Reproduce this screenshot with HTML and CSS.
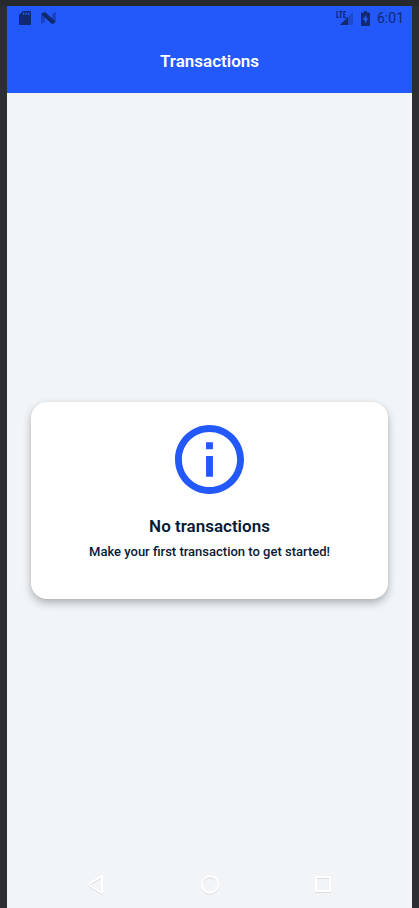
FILE: index.html
```html
<!DOCTYPE html>
<html lang="en">
<head>
<meta charset="utf-8">
<meta name="viewport" content="width=device-width, initial-scale=1">
<title>Transactions</title>
<link rel="stylesheet" href="styles.css">
</head>
<body>
<div class="screen">
  <header class="header">
    <div class="status">
      <div class="status-group status-left">
        <svg width="12" height="14" viewBox="0 0 12 14" aria-hidden="true"><path fill="#11296f" fill-rule="evenodd" d="M4 0H11Q12 0 12 1V13Q12 14 11 14H1Q0 14 0 13V4ZM4 1.500V4H5.300V1.500ZM6.500 1.500V4H7.800V1.500ZM9 1.500V4H10.300V1.500Z"/></svg>
        <svg width="15" height="12" viewBox="0 0 15 12" aria-hidden="true"><path fill="#1b43bb" d="M0 1L4 3V10L0 12ZM11 2L15 0V10L11 9Z"/><path fill="#11296f" d="M1 1L4 0L14 9V11L11 12L1 3Z"/></svg>
      </div>
      <div class="status-group status-right">
        <svg width="18" height="15" viewBox="0 0 18 15" aria-hidden="true"><path fill="#1d49ca" d="M17 1V14H4Z"/><path fill="#11296f" d="M12 6V14H4Z"/><path fill="none" stroke="#11296f" stroke-width="1.200" d="M1 0V6.400H3M3 .6H6.400M4.700 .6V7M10 .6H7.800V6.400H10M7.800 3.500H9.700"/></svg>
        <svg width="9" height="15" viewBox="0 0 9 15" aria-hidden="true"><path fill="#11296f" d="M3 0H6V1.500H8Q9 1.500 9 2.500V14Q9 15 8 15H1Q0 15 0 14V2.500Q0 1.500 1 1.500H3Z"/><path fill="#2359fb" d="M5.200 3.500L1.700 9H4V12.800L7.300 7.300H5.200Z"/></svg>
        <time class="clock">6:01</time>
      </div>
    </div>
    <h1 class="title">Transactions</h1>
  </header>
  <main class="content">
    <section class="card">
      <svg class="info" width="69" height="69" viewBox="2 2 20 20" aria-hidden="true"><path fill="#2359fb" d="M11 7h2v2h-2zm0 4h2v6h-2zm1-9C6.480 2 2 6.480 2 12s4.480 10 10 10 10-4.480 10-10S17.520 2 12 2zm0 18c-4.410 0-8-3.590-8-8s3.590-8 8-8 8 3.590 8 8-3.590 8-8 8z"/></svg>
      <h2 class="card-title">No transactions</h2>
      <p class="card-text">Make your first transaction to get started!</p>
    </section>
  </main>
  <nav class="navbar" aria-label="System">
    <button class="nav-button" aria-label="Back"><svg width="20" height="22" viewBox="0 0 20 22" aria-hidden="true"><path class="shade" d="M16 4V21L2 12.500Z"/><path class="line" d="M16 3V20L2 11.500Z"/></svg></button>
    <button class="nav-button" aria-label="Home"><svg width="20" height="22" viewBox="0 0 20 22" aria-hidden="true"><circle class="shade" cx="10" cy="12.500" r="8.300"/><circle class="line" cx="10" cy="11.500" r="8.300"/></svg></button>
    <button class="nav-button" aria-label="Overview"><svg width="20" height="22" viewBox="0 0 20 22" aria-hidden="true"><rect class="shade" x="3" y="5" width="14" height="14"/><rect class="line" x="3" y="4" width="14" height="14"/></svg></button>
  </nav>
</div>
</body>
</html>
```
FILE: styles.css
```css
* {
  box-sizing: border-box;
}

body {
  margin: 0;
  padding: 0 7px;
  min-height: 100vh;
  display: flex;
  background: #2d2e32;
  border-top: 6px solid #28292c;
  font-family: Roboto, "Liberation Sans", sans-serif;
  color: #061a36;
}

.screen {
  position: relative;
  flex: 1;
  display: flex;
  flex-direction: column;
  background: #f1f5f8;
}

.header {
  background: #2359fb;
}

.status {
  height: 24px;
  padding: 0 8px 0 12px;
  display: flex;
  align-items: center;
  justify-content: space-between;
  color: #11296f;
}

.status-group {
  display: flex;
  align-items: center;
}

.status-left {
  gap: 10px;
}

.status-right {
  gap: 7px;
}

.clock {
  font-size: 14px;
  line-height: 24px;
}

.title {
  margin: 0;
  padding: 19px 0 20px;
  font-size: 17px;
  line-height: 24px;
  font-weight: 600;
  text-align: center;
  color: #fff;
}

.content {
  flex: 1;
  display: flex;
  flex-direction: column;
  justify-content: center;
  padding: 0 24px;
}

.card {
  display: flex;
  flex-direction: column;
  align-items: center;
  padding: 23px 16px 37px;
  border-radius: 16px;
  background: #fff;
  box-shadow: 0 4px 8px rgba(0, 0, 0, 0.28), 0 0 3px rgba(0, 0, 0, 0.04);
  text-align: center;
}

.card-title {
  margin: 20px 0 4px;
  font-size: 17px;
  line-height: 24px;
  font-weight: 600;
}

.card-text {
  margin: 0;
  font-size: 13px;
  line-height: 20px;
  font-weight: 500;
}

.navbar {
  position: absolute;
  right: 0;
  bottom: 0;
  left: 0;
  height: 48px;
  padding: 0 32px;
  display: flex;
}

.nav-button {
  flex: 1;
  display: flex;
  align-items: center;
  justify-content: center;
  padding: 0;
  border: 0;
  background: none;
}

.line,
.shade {
  fill: none;
  stroke: #fff;
  stroke-width: 2px;
  stroke-linejoin: round;
}

.shade {
  stroke: #d9dde1;
}
```
